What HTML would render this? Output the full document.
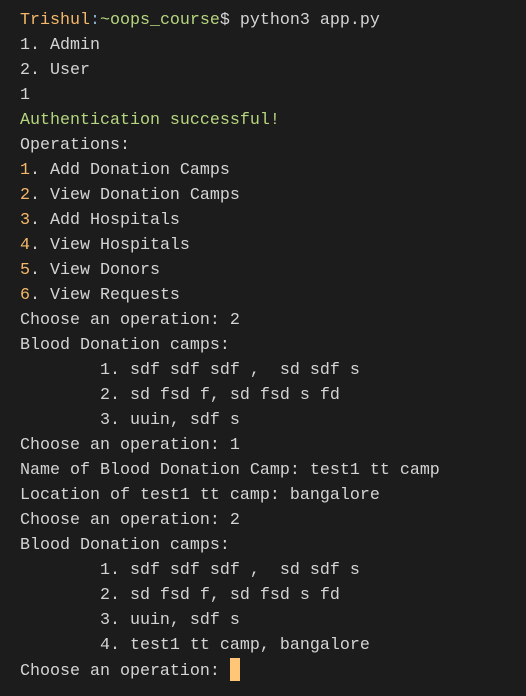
<!DOCTYPE html>
<html><head><style>
html,body{margin:0;padding:0;background:#1c1c1c;width:526px;height:696px;overflow:hidden}
pre{margin:0;position:absolute;left:20px;top:8px;font-family:"Liberation Mono","DejaVu Sans Mono",monospace;font-size:16.67px;line-height:25px;color:#d4d4d4}
.o{color:#f5b86a}.g{color:#b5d57f}.c{color:#8ab4cf}
.cur{display:inline-block;width:10px;height:23px;background:#ffc677;vertical-align:-6px}
</style></head><body><pre><span class="o">Trishul</span><span class="c">:</span><span class="g">~oops_course</span>$ python3 app.py
1. Admin
2. User
1
<span class="g">Authentication successful!</span>
Operations:
<span class="o">1</span>. Add Donation Camps
<span class="o">2</span>. View Donation Camps
<span class="o">3</span>. Add Hospitals
<span class="o">4</span>. View Hospitals
<span class="o">5</span>. View Donors
<span class="o">6</span>. View Requests
Choose an operation: 2
Blood Donation camps:
        1. sdf sdf sdf ,  sd sdf s
        2. sd fsd f, sd fsd s fd
        3. uuin, sdf s
Choose an operation: 1
Name of Blood Donation Camp: test1 tt camp
Location of test1 tt camp: bangalore
Choose an operation: 2
Blood Donation camps:
        1. sdf sdf sdf ,  sd sdf s
        2. sd fsd f, sd fsd s fd
        3. uuin, sdf s
        4. test1 tt camp, bangalore
Choose an operation: <span class="cur"></span></pre></body></html>
